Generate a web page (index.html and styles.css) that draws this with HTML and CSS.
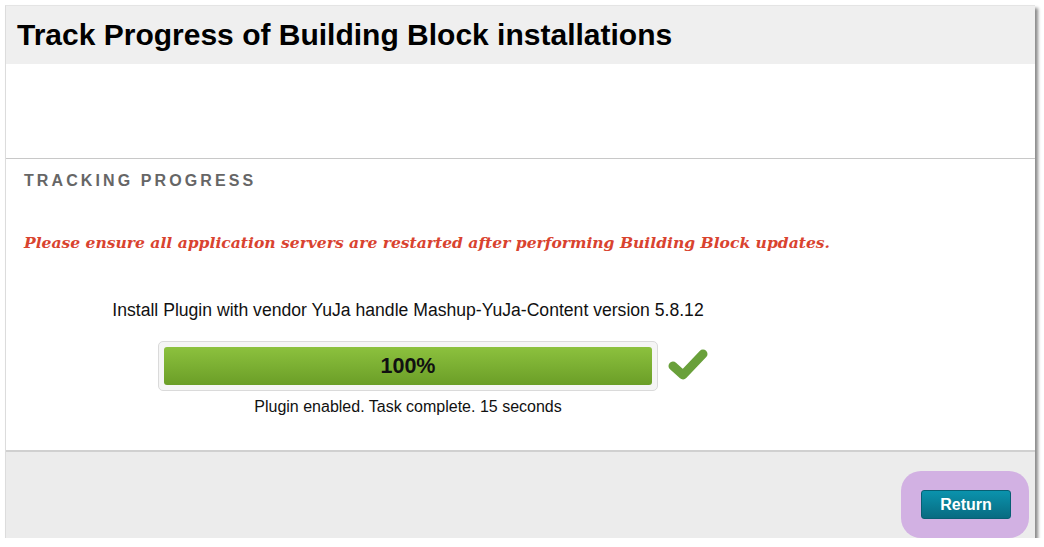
FILE: index.html
```html
<!DOCTYPE html>
<html lang="en">
<head>
    <meta charset="UTF-8">
    <title>Track Progress of Building Block installations</title>
    <link rel="stylesheet" href="styles.css">
</head>
<body>
    <div class="frame">
        <div class="page-title">
            <h1>Track Progress of Building Block installations</h1>
        </div>

        <div class="panel">
            <div class="panel-top"></div>
            <div class="section">
                <h2>Tracking Progress</h2>
                <p class="warning">Please ensure all application servers are restarted after performing Building Block updates.</p>

                <div class="task">
                    <div class="task-name">Install Plugin with vendor YuJa handle Mashup-YuJa-Content version 5.8.12</div>
                    <div class="progress-row">
                        <div class="progress">
                            <div class="progress-bar" style="width: 100%">100%</div>
                        </div>
                        <svg class="done" width="42" height="34" viewBox="0 0 42 34">
                            <path d="M6 19 L16 28 L36 7" fill="none" stroke="#69a03a" stroke-width="9" stroke-linecap="round" stroke-linejoin="round"/>
                        </svg>
                    </div>
                    <div class="task-status">Plugin enabled. Task complete. 15 seconds</div>
                </div>
            </div>
        </div>

        <div class="footer">
            <div class="highlight">
                <button class="btn-return">Return</button>
            </div>
        </div>
    </div>
</body>
</html>
```

FILE: styles.css
```css
body {
    margin: 0;
    padding: 5px 0 0 5px;
    background-color: #fff;
    font-family: "Liberation Sans", Arial, sans-serif;
}

.frame {
    width: 1029px;
    height: 532px;
    border-left: 1px solid #dcdcdc;
    border-top: 1px solid #e4e4e4;
    background-color: #ececec;
    box-shadow: 3px 3px 3px rgba(0, 0, 0, 0.45);
    display: flex;
    flex-direction: column;
}

.page-title {
    background-color: #efefef;
    height: 58px;
    padding-left: 11px;
    display: flex;
    align-items: center;
}

.page-title h1 {
    margin: 0;
    font-size: 30px;
    font-weight: bold;
    color: #000;
}

.panel {
    background-color: #fff;
    border-bottom: 2px solid #d0d0d0;
}

.panel-top {
    height: 94px;
    border-bottom: 1px solid #c8c8c8;
}

.section {
    padding: 13px 0 0 18px;
    height: 278px;
}

.section h2 {
    margin: 0;
    font-size: 16px;
    font-weight: bold;
    text-transform: uppercase;
    letter-spacing: 3.1px;
    color: #666;
}

.warning {
    margin: 43px 0 0 0;
    font-family: "DejaVu Serif", Georgia, serif;
    font-style: italic;
    font-weight: bold;
    font-size: 15.55px;
    color: #d9432f;
}

.task {
    width: 600px;
    margin: 48px 0 0 84px;
    text-align: center;
}

.task-name {
    font-size: 17.6px;
    color: #111;
    white-space: nowrap;
}

.progress-row {
    position: relative;
    margin-top: 20px;
}

.progress {
    width: 488px;
    height: 38px;
    margin: 0 auto;
    padding: 5px;
    background-color: #f5f5f5;
    border: 1px solid #dadada;
    border-radius: 5px;
}

.progress-bar {
    height: 38px;
    line-height: 38px;
    background: linear-gradient(#8cc13e, #6b9e27);
    border-radius: 3px;
    font-size: 21.5px;
    font-weight: bold;
    color: #111;
}

.done {
    position: absolute;
    left: 559px;
    top: 6px;
}

.task-status {
    margin-top: 7px;
    font-size: 16px;
    color: #111;
}

.footer {
    flex: 1;
    display: flex;
    justify-content: flex-end;
    align-items: flex-end;
    padding-right: 6px;
}

.highlight {
    background-color: #d2b1e3;
    border-radius: 20px;
    padding: 19px 18px 19px 20px;
}

.btn-return {
    display: block;
    width: 90px;
    height: 29px;
    background: linear-gradient(#0b93ad, #086b81);
    border: 1px solid #075f73;
    border-radius: 3px;
    color: #fff;
    font-family: "Liberation Sans", Arial, sans-serif;
    font-size: 16px;
    font-weight: bold;
    cursor: pointer;
}
```
